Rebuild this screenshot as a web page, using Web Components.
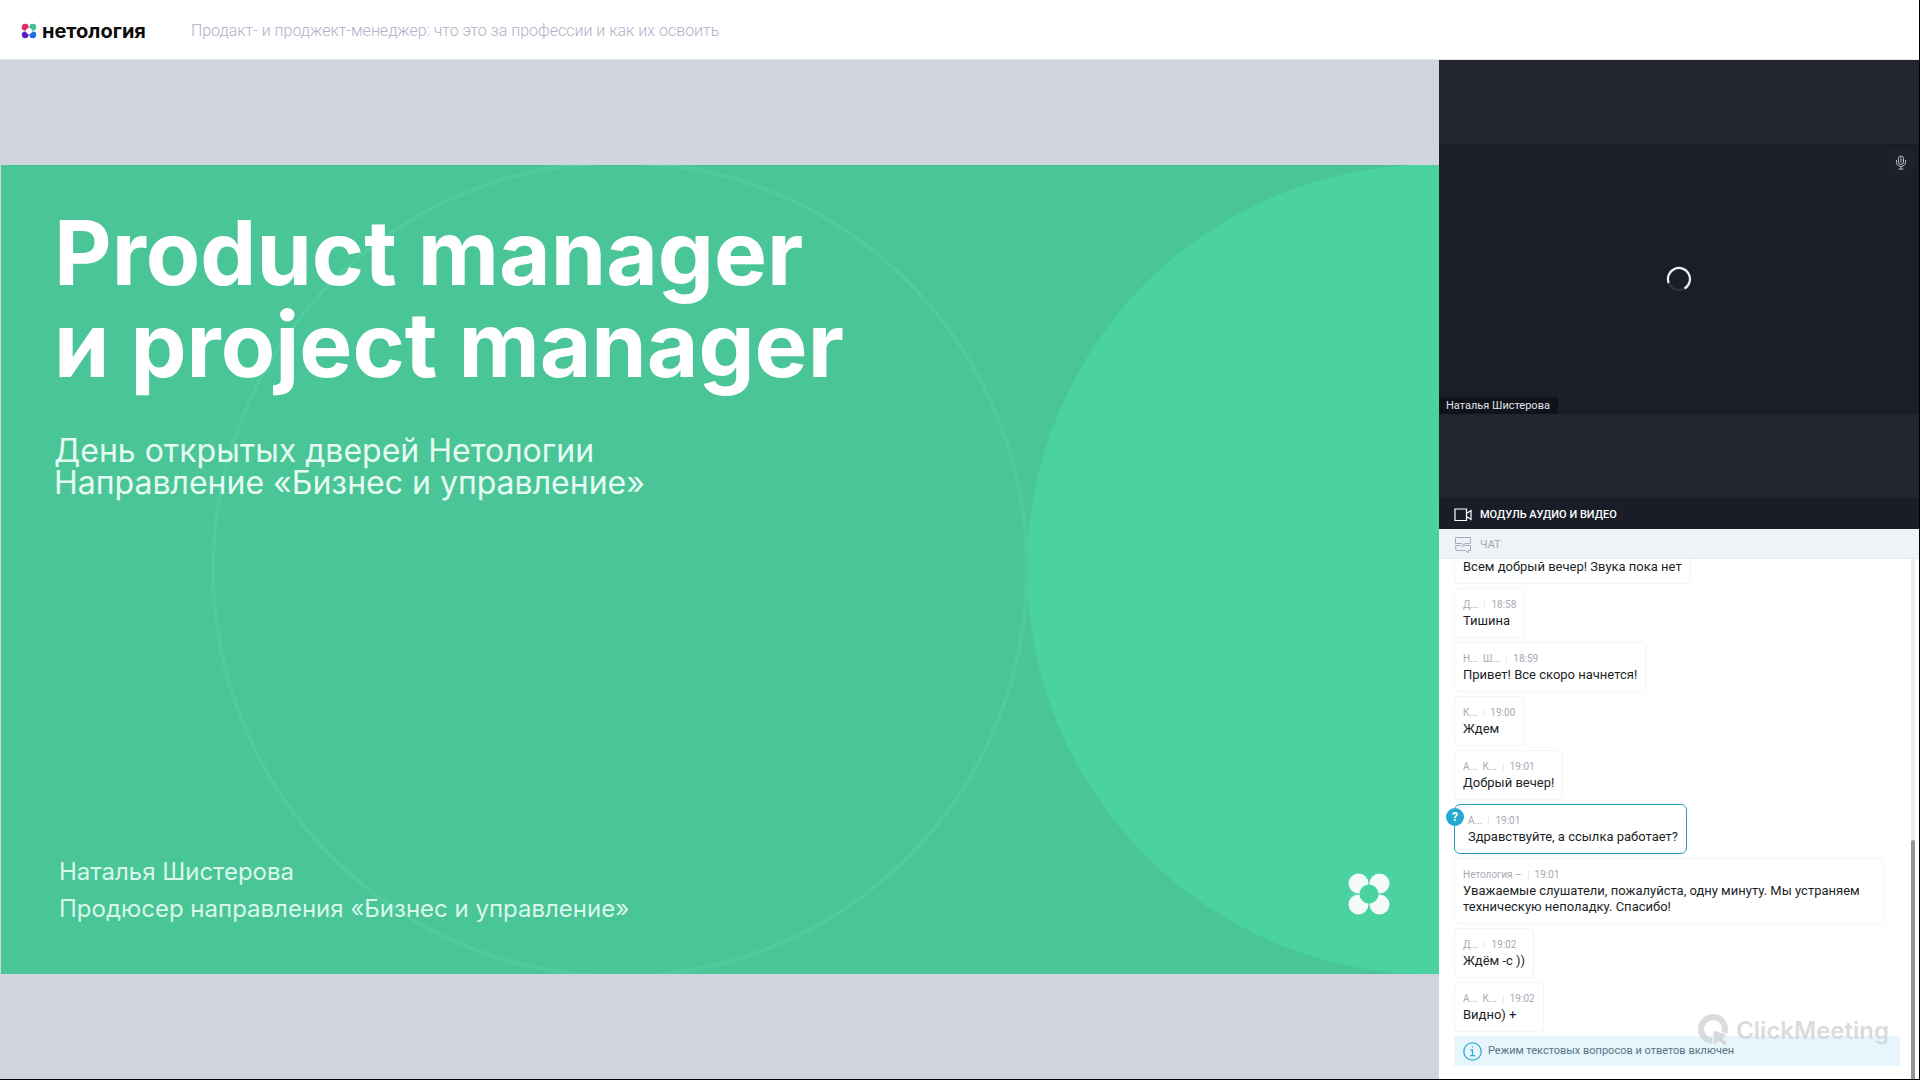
<!DOCTYPE html>
<html lang="ru">
<head>
<meta charset="utf-8">
<title>Нетология — вебинар</title>
<style>
html, body { margin: 0; height: 100%; background: #000; }
body { font-family: Roboto, "Liberation Sans", sans-serif; }
</style>
</head>
<body>
<webinar-app></webinar-app>
<script>
const define = (name, html, setup) => {
  const template = document.createElement('template');
  template.innerHTML = html;
  customElements.define(name, class extends HTMLElement {
    constructor() {
      super();
      this.attachShadow({ mode: 'open' }).append(template.content.cloneNode(true));
    }
    connectedCallback() { if (setup) setup(this, this.shadowRoot); }
  });
};

define('brand-logo', `
<style>
:host { display: block; }
a { display: flex; align-items: center; gap: 5px; color: #0c0c0c; text-decoration: none; font: 700 20px/20px Inter, sans-serif; }
svg { display: block; }
</style>
<a href="#" aria-label="нетология">
<svg width="16" height="16" viewBox="0 0 16 16">
<circle cx="4.2" cy="4.2" r="3.4" fill="#e02a6b"/><circle cx="11.8" cy="4.2" r="3.4" fill="#3fc08f"/>
<circle cx="4.2" cy="11.8" r="3.4" fill="#5b1ec8"/><circle cx="11.8" cy="11.8" r="3.4" fill="#1d6fe0"/>
<circle cx="8" cy="8" r="3" fill="#fff"/>
</svg><span>нетология</span></a>`);

define('top-bar', `
<style>
:host { display: block; background: #fff; }
header { display: flex; align-items: center; gap: 45px; height: 60px; padding: 2px 21px 0; box-sizing: border-box; border-bottom: 1px solid #e8e8ee; }
h1 { margin: 0; font-weight: 300; font-size: 16px; line-height: 20px; color: #b0b0c6; }
</style>
<header><brand-logo></brand-logo><h1><slot></slot></h1></header>`);

define('slide-view', `
<style>
:host { display: grid; align-items: center; background: #d1d5df; min-width: 0; overflow: hidden; }
article { display: grid; aspect-ratio: 16 / 9; margin-left: 1px; background: #49c598; color: #fff; font-family: Inter, sans-serif; overflow: hidden; }
svg.bg, .content { grid-area: 1 / 1; min-width: 0; min-height: 0; }
svg.bg { width: 100%; height: 100%; display: block; }
.content { display: flex; flex-direction: column; padding: 42px 48px 47px 53px; box-sizing: border-box; }
h2 { margin: 0; font-weight: 700; font-size: 89px; line-height: 92px; }
.sub { margin: 44px 0 0; font-weight: 400; font-size: 32px; line-height: 32px; color: #e6fbf2; }
footer { margin-top: auto; padding-left: 5px; display: flex; justify-content: space-between; align-items: center; }
.who { margin: 0; font-weight: 400; font-size: 24px; line-height: 37px; color: #d9f8ea; }
footer svg { margin-top: 8px; }
</style>
<article>
<svg class="bg" viewBox="0 0 1438 809" preserveAspectRatio="xMidYMid slice" aria-hidden="true">
<circle cx="1431" cy="404.500" r="405" fill="#4ad3a0"/>
<circle cx="619" cy="404.500" r="407" fill="none" stroke="#50cb9e" stroke-width="4"/>
</svg>
<div class="content">
<h2>Product manager<br>и project manager</h2>
<p class="sub">День открытых дверей Нетологии<br>Направление «Бизнес и управление»</p>
<footer>
<p class="who">Наталья Шистерова<br>Продюсер направления «Бизнес и управление»</p>
<svg width="44" height="44" viewBox="0 0 44 44" aria-hidden="true">
<g fill="#f3faf7"><circle cx="11.500" cy="11.500" r="10"/><circle cx="32.500" cy="11.500" r="10"/><circle cx="11.500" cy="32.500" r="10"/><circle cx="32.500" cy="32.500" r="10"/></g>
<circle cx="22" cy="22" r="9.500" fill="#4ad3a0"/>
</svg>
</footer>
</div>
</article>`);

define('video-pod', `
<style>
:host { display: block; background: #22252f; }
.stage { display: grid; align-items: center; height: 438px; }
.tile { display: grid; grid-template: 1fr auto / 1fr; aspect-ratio: 16 / 9; background: #1b1e29; }
.mic { grid-area: 1 / 1; justify-self: end; align-self: start; margin: 5px; width: 26px; height: 26px; padding: 0; border: 0; border-radius: 3px; background: #1e212c; display: grid; place-items: center; }
.spin { grid-area: 1 / 1 / 3 / 2; place-self: center; }
.name { grid-area: 2 / 1; justify-self: start; padding: 1px 8px 0 7px; background: #11131b; color: #e4e5ea; font-size: 11px; line-height: 16px; }
h2 { display: flex; align-items: center; gap: 8px; margin: 0; height: 31px; padding: 2px 15px 0; box-sizing: border-box; background: #1a1d28; color: #fff; font-weight: 500; font-size: 11px; line-height: 16px; }
</style>
<section>
<div class="stage"><div class="tile">
<button class="mic" aria-label="Микрофон"><svg width="12" height="15" viewBox="0 0 12 15" fill="none" stroke="#b9bbc5" stroke-width="1"><rect x="3.500" y="1" width="5" height="8.500" rx="2.500"/><path d="M6 2.500v5M1.500 5v2.500a4.500 4 0 0 0 9 0V5M6 11.500V14M3.500 14h5"/></svg></button>
<svg class="spin" width="26" height="26" viewBox="0 0 26 26" fill="none" stroke-width="2.200"><circle cx="13" cy="13" r="11" stroke="#30333e"/><path d="M2.700 17A11 11 0 1 1 18.500 22.500" stroke="#eef0f5"/></svg>
<span class="name">Наталья Шистерова</span>
</div></div>
<h2><svg width="18" height="14" viewBox="0 0 18 14" fill="none" stroke="#fff" stroke-width="1.200"><path d="M1 1h11.500v11.500H1zM12.500 5.500L17 2.500v9L12.500 8.500"/></svg>МОДУЛЬ АУДИО И ВИДЕО</h2>
</section>`);

define('chat-message', `
<style>
:host { display: block; position: relative; flex: none; box-sizing: border-box; width: fit-content; max-width: 430px; padding: 8px 8px 7px; border: 1px solid #f4f4f8; border-radius: 4px; background: #fff; }
:host([question]) { padding: 8px 8px 7px 13px; border-color: #2b9fbd; border-radius: 6px; }
.meta { display: flex; align-items: center; gap: 6px; height: 16px; font-size: 10px; line-height: 16px; color: #a9a9b4; }
.meta i { width: 1px; height: 8px; background: #ececf1; }
.name { white-space: pre; }
p { margin: 0; font-size: 13px; line-height: 16px; color: #1d1f26; padding-bottom: 1px; }
.badge { display: none; position: absolute; left: -9px; top: 3px; width: 18px; height: 18px; border-radius: 50%; background: #25a9d3; color: #fff; font-weight: 700; font-size: 12px; line-height: 18px; text-align: center; }
:host([question]) .badge { display: block; }
</style>
<p><slot></slot></p>`, (el, root) => {
  if (!el.hasAttribute('from') || root.querySelector('.meta')) return;
  const meta = document.createElement('div');
  meta.className = 'meta';
  meta.innerHTML = '<span class="name"></span><i></i><time></time>';
  meta.querySelector('.name').textContent = el.getAttribute('from');
  meta.querySelector('time').textContent = el.getAttribute('at');
  root.querySelector('p').before(meta);
  if (el.hasAttribute('question')) {
    const badge = document.createElement('span');
    badge.className = 'badge';
    badge.textContent = '?';
    meta.before(badge);
  }
});

define('click-mark', `
<style>
:host { display: flex; align-items: center; gap: 6px; color: #cfd0d2; opacity: .75; font: 600 24px/34px Inter, sans-serif; }
</style>
<svg width="32" height="34" viewBox="0 0 32 34" aria-hidden="true"><circle cx="15" cy="15" r="12" fill="none" stroke="currentColor" stroke-width="6"/><path d="M15 16l14 4-4 4 5 6-4 2-5-5-6 5z" fill="currentColor" stroke="#fff" stroke-width="1"/></svg>
<span>ClickMeeting</span>`);

define('chat-pod', `
<style>
:host { display: flex; flex-direction: column; min-height: 0; background: #fff; }
h2 { flex: none; display: flex; align-items: center; gap: 8px; margin: 0; height: 30px; padding: 2px 15px 0; box-sizing: border-box; background: #eff2f7; border-bottom: 1px solid #e6eaf0; color: #a4a7b1; font-weight: 400; font-size: 11px; line-height: 16px; }
.body { flex: 1; min-height: 0; display: flex; }
.col { position: relative; flex: 1; min-width: 0; display: flex; flex-direction: column; padding: 0 11px 13px 15px; }
.log { flex: 1; min-height: 0; overflow: hidden; margin-left: -15px; padding: 0 0 4px 15px; display: flex; flex-direction: column; justify-content: flex-end; gap: 4px; }
.note { flex: none; display: flex; align-items: center; gap: 6px; height: 30px; padding: 0 9px; background: #e7f6fd; color: #587581; font-size: 11px; line-height: 16px; }
click-mark { position: absolute; right: 22px; bottom: 31px; }
.bar { flex: none; width: 4px; margin-right: 4px; background: #ededf1; display: flex; align-items: flex-end; }
.bar div { width: 100%; height: 46%; border-radius: 2px 2px 0 0; background: #94959c; }
</style>
<h2><svg width="18" height="18" viewBox="0 0 18 18" fill="none" stroke="#a9adba" stroke-width="1"><path d="M1.500 1.500h15v6h-5l-2 1-2-1h-6zM1.500 9.500h5l2 1 2-1h6v5h-2.500v2.500l-2.500-2.500h-9.500z"/></svg>ЧАТ</h2>
<div class="body">
<div class="col">
<div class="log"><slot></slot></div>
<div class="note"><svg width="19" height="19" viewBox="0 0 19 19" fill="none" stroke="#35abd3" stroke-width="1.300"><circle cx="9.500" cy="9.500" r="8.700"/><path d="M7.500 8h2v5.500M7 13.700h5M9 4.800h1.200"/></svg>Режим текстовых вопросов и ответов включен</div>
<click-mark></click-mark>
</div>
<div class="bar"><div></div></div>
</div>`);

define('webinar-app', `
<style>
:host { display: grid; grid-template: auto 1fr / 1fr 480px; height: 100vh; padding: 0 1px 1px 0; box-sizing: border-box; }
top-bar { grid-column: 1 / -1; }
aside { display: grid; grid-template-rows: auto 1fr; min-height: 0; }
</style>
<top-bar>Продакт- и проджект-менеджер: что это за профессии и как их освоить</top-bar>
<slide-view></slide-view>
<aside>
<video-pod></video-pod>
<chat-pod>
<chat-message>Всем добрый вечер! Звука пока нет</chat-message>
<chat-message from="Д..." at="18:58">Тишина</chat-message>
<chat-message from="Н...  Ш..." at="18:59">Привет! Все скоро начнется!</chat-message>
<chat-message from="К..." at="19:00">Ждем</chat-message>
<chat-message from="А...  К..." at="19:01">Добрый вечер!</chat-message>
<chat-message question from="А..." at="19:01">Здравствуйте, а ссылка работает?</chat-message>
<chat-message from="Нетология –" at="19:01">Уважаемые слушатели, пожалуйста, одну минуту. Мы устраняем техническую неполадку. Спасибо!</chat-message>
<chat-message from="Д..." at="19:02">Ждём -с ))</chat-message>
<chat-message from="А...  К..." at="19:02">Видно) +</chat-message>
</chat-pod>
</aside>`);
</script>
</body>
</html>
